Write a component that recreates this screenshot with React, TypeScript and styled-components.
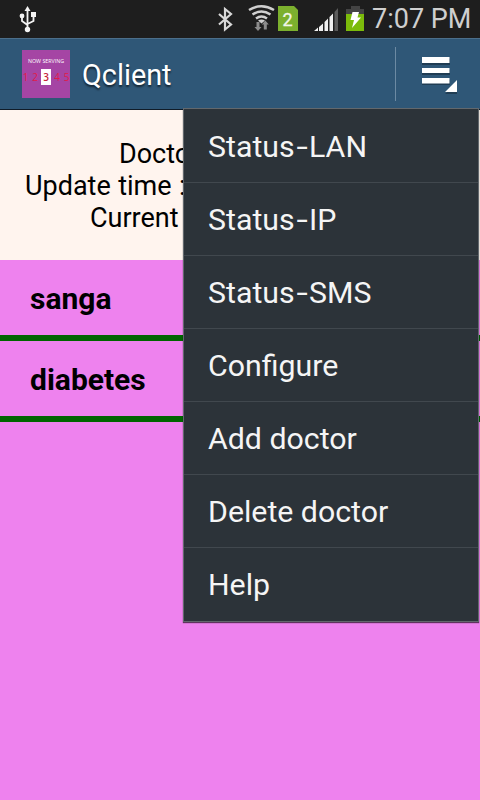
import React from "react";
import styled, { createGlobalStyle } from "styled-components";

const GlobalStyle = createGlobalStyle`
  * { box-sizing: border-box; }
  body { margin: 0; font-family: Roboto, sans-serif; }
`;

const Screen = styled.div`
  position: relative;
  width: 480px;
  height: 800px;
  display: flex;
  flex-direction: column;
  overflow: hidden;
  background: #ee82ee;
`;

const StatusBar = styled.div`
  display: flex;
  align-items: center;
  height: 38px;
  flex: none;
  padding: 0 9px 0 18px;
  background: #1e1e1e;
`;

const StatusIcons = styled.svg`
  display: block;
  flex: none;
`;

const Spacer = styled.div`
  flex: 1;
`;

const Clock = styled.time`
  margin-left: 7px;
  width: 99px;
  font-size: 27px;
  line-height: 38px;
  white-space: nowrap;
  color: #cfcfcf;
`;

const ActionBar = styled.header`
  display: flex;
  align-items: center;
  height: 72px;
  flex: none;
  padding: 0 22px;
  background: #2f5777;
  border-top: 1px solid #4c6f8b;
  border-bottom: 1px solid #101c28;
`;

const AppIcon = styled.div`
  display: flex;
  flex-direction: column;
  align-items: center;
  width: 48px;
  height: 48px;
  padding-top: 7px;
  background: #a545a4;
`;

const IconCaption = styled.span`
  font: 5.3px/8px "Open Sans", sans-serif;
  color: #fff;
  white-space: nowrap;
`;

const Digits = styled.div`
  display: flex;
  width: 48px;
  margin-top: 4px;
  justify-content: space-between;
`;

const Digit = styled.span<{ $current?: boolean }>`
  width: ${(p) => (p.$current ? 10 : 7)}px;
  text-align: center;
  font: ${(p) => (p.$current ? 600 : 400)} 10px/16px "Open Sans", sans-serif;
  color: ${(p) => (p.$current ? "#c52438" : "#e01c48")};
  background: ${(p) => (p.$current ? "#fff" : "transparent")};
`;

const Title = styled.h1`
  margin: 2px 0 0 12px;
  font-size: 28.8px;
  line-height: 36px;
  font-weight: 400;
  color: #fff;
  text-shadow: 0 2px 2px rgba(0, 0, 0, 0.6);
`;

const Separator = styled.div`
  width: 1px;
  height: 54px;
  margin-right: 25px;
  background: #6c8aa3;
`;

const Info = styled.section`
  height: 150px;
  flex: none;
  padding-top: 28px;
  background: #fff4ee;
`;

const InfoLine = styled.div<{ $indent: number }>`
  padding-left: ${(p) => p.$indent}px;
  font-size: 27px;
  line-height: 32px;
  word-spacing: 0.7px;
  white-space: nowrap;
  color: #000;
`;

const QueueRow = styled.div`
  height: 81px;
  flex: none;
  padding-left: 30px;
  border-bottom: 6px solid #006400;
  font-size: 30px;
  line-height: 78px;
  font-weight: 700;
  color: #000;
`;

const Menu = styled.nav`
  position: absolute;
  top: 108px;
  left: 183px;
  width: 296px;
  height: 514px;
  padding-top: 1px;
  border: 1px solid #62686d;
  background: #2c3339;
  box-shadow: 0 1px 1px rgba(0, 0, 0, 0.6);
`;

const MenuItem = styled.div`
  height: 73px;
  padding-left: 24px;
  border-bottom: 1px solid #41484e;
  font-size: 30.3px;
  line-height: 74px;
  color: #f5f5f5;
  white-space: nowrap;
  &:last-child { border-bottom: 0; }
`;

const Hyphen = styled.span`
  display: inline-block;
  margin: 0 3px;
  transform: scaleX(1.35);
`;

const infoLines = [
  { text: "Doctor", indent: 119 },
  { text: "Update time :", indent: 25 },
  { text: "Current", indent: 90 },
];
const queues = ["sanga", "diabetes"];
const options = ["Status-LAN", "Status-IP", "Status-SMS", "Configure", "Add doctor", "Delete doctor", "Help"];

const UsbIcon = () => (
  <StatusIcons width="20" height="38" viewBox="18 0 20 38">
    <g fill="none" stroke="#f4f4f4" strokeWidth="1.8">
      <path d="M27.5 9v20M22 17v4l5.500 4M33.500 16v5l-6 3" />
    </g>
    <g fill="#f4f4f4">
      <path d="M27.5 6l3 5h-6z" />
      <circle cx="27.5" cy="29.5" r="2.7" />
      <circle cx="22" cy="16" r="2.4" />
      <path d="M31 12h5v5h-5z" />
    </g>
  </StatusIcons>
);

const SignalIcons = () => (
  <StatusIcons width="150" height="38" viewBox="215 0 150 38">
    <path d="M219 14l12 10.500-6 5V9l6 5-12 10.500" fill="none" stroke="#d8d8d8" strokeWidth="2.2" />
    <g fill="none" stroke="#d0d0d0" strokeWidth="2.5">
      <path d="M249 10q12.500-7.500 25 0M252.500 14.500q9-6 18 0M256 18.500q5.500-4 11 0" />
    </g>
    <path d="M258 20.500q3.500-2 7 0l-3.500 3z" fill="#d0d0d0" />
    <path d="M256.500 22h3v5h2l-3.500 4-3.500-4h2zM263.800 29.500v-5h-2l3.500-4 3.500 4h-2v5z" fill="#8c8c8c" />
    <path d="M278 6h16l4 4v21h-20z" fill="#7cb02e" />
    <text x="287.500" y="25.500" textAnchor="middle" fontFamily="Roboto, sans-serif" fontSize="18" fill="#f2f6e8" stroke="#f2f6e8" strokeWidth="0.300">2</text>
    <g fill="#f0f0f0">
      <path d="M314 31l4-3.500V31zM319 27l4-3.500V31h-4zM324.500 22l3.500-3.500V31h-3.500zM329.500 17l3.500-3.500V31h-3.500z" />
      <path d="M334.500 12l3.500-4v23h-3.500z" fill="#5b5b5b" />
    </g>
    <path d="M351 6h9v3h4v5h-18V9h5z" fill="#444" />
    <path d="M346 14h18v17h-18z" fill="#7cbb0b" />
    <path d="M352.500 12h6.500l-1.500 5.500h3.500l-9 10.500 2-8h-3.500z" fill="#fff" />
  </StatusIcons>
);

const MenuIcon = () => (
  <svg width="37" height="44" viewBox="421 52 37 44">
    <g fill="#172b3e" opacity="0.6">
      <path d="M422 59h28v6h-28zM422 70h28v5h-28zM422 80h28v5h-28zM445 94l12-12v12z" />
    </g>
    <path d="M422 57h27.500v6H422zM422 68h27.500v5H422zM422 78h27.500v5.500H422zM445 92l12-12v12z" fill="#fff" />
  </svg>
);

const OptionLabel = ({ label }: { label: string }) => {
  const [head, tail] = label.split("-");
  return tail ? <>{head}<Hyphen>-</Hyphen>{tail}</> : <>{head}</>;
};

export default function App() {
  return (
    <>
      <GlobalStyle />
      <Screen>
        <StatusBar>
          <UsbIcon />
          <Spacer />
          <SignalIcons />
          <Clock>7:07 PM</Clock>
        </StatusBar>
        <ActionBar>
          <AppIcon>
            <IconCaption>NOW SERVING</IconCaption>
            <Digits>
              {[1, 2, 3, 4, 5].map((n) => (
                <Digit key={n} $current={n === 3}>{n}</Digit>
              ))}
            </Digits>
          </AppIcon>
          <Title>Qclient</Title>
          <Spacer />
          <Separator />
          <MenuIcon />
        </ActionBar>
        <Info>
          {infoLines.map((line) => (
            <InfoLine key={line.text} $indent={line.indent}>{line.text}</InfoLine>
          ))}
        </Info>
        {queues.map((name) => (
          <QueueRow key={name}>{name}</QueueRow>
        ))}
        <Menu>
          {options.map((label) => (
            <MenuItem key={label}><OptionLabel label={label} /></MenuItem>
          ))}
        </Menu>
      </Screen>
    </>
  );
}
